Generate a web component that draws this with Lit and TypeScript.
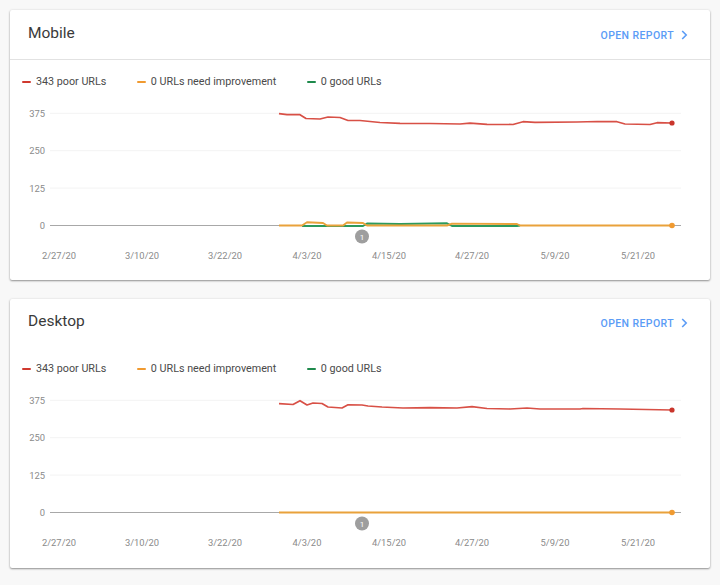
import { LitElement, html, css, svg } from "lit";
import { customElement, property } from "lit/decorators.js";

type Pt = [number, number];
const pts = (p: Pt[]) => p.map(([x, y]) => `${x},${y}`).join(" ");

const X_LABELS: [string, number][] = [
  ["2/27/20", 59], ["3/10/20", 142], ["3/22/20", 225], ["4/3/20", 307],
  ["4/15/20", 389], ["4/27/20", 472], ["5/9/20", 555], ["5/21/20", 638],
];

const MOBILE_RED: Pt[] = [[279,113.7],[287,114.7],[300,114.7],[306,118.5],[320,119],[328,117],[340,117.5],[348,120.5],[360,120.5],[380,122.5],[400,123.3],[430,123.5],[460,124],[470,123.2],[487,124.3],[513,124.5],[523,121.7],[535,122.3],[577,122],[597,121.5],[617,121.7],[625,124],[650,124.5],[657,122.7],[672,123]];
const MOBILE_ORANGE: Pt[] = [[279,225.5],[302,225.5],[307,222.3],[323,223],[327,225.5],[343,225.5],[347,222.5],[363,223],[367,225.5],[447,225.5],[452,223.6],[517,224],[520,225.5],[672,225.5]];
const MOBILE_GREEN: Pt[] = [[302,226],[327,226],[343,226],[347,226],[363,226],[367,223.5],[400,224],[447,223.3],[452,226],[517,226],[520,225.5]];
const DESK_RED: Pt[] = [[279,403.7],[293,404.5],[300,400.7],[307,405],[313,403],[322,403.5],[328,407],[342,408],[348,404.8],[362,405],[368,406],[382,407],[403,408],[430,407.7],[457,408],[472,406.7],[487,408.5],[510,409],[527,408],[540,409],[580,409],[583,408.5],[620,409],[672,410]];
const DESK_ORANGE: Pt[] = [[279,512.5],[672,512.5]];

@customElement("usability-card")
class UsabilityCard extends LitElement {
  @property() heading = "";
  @property({ type: Boolean }) divided = false;
  @property({ type: Number }) top = 0;
  @property({ type: Number }) chartHeight = 170;
  @property({ attribute: false }) red: Pt[] = [];
  @property({ attribute: false }) orange: Pt[] = [];
  @property({ attribute: false }) green: Pt[] = [];

  static styles = css`
    :host { display: block; }
    .card {
      background: #fff;
      border-radius: 2px;
      box-shadow: 0 1px 2px rgba(0,0,0,.4), 0 0 3px rgba(0,0,0,.08);
      font-family: Roboto, "Liberation Sans", sans-serif;
    }
    .head {
      display: flex;
      justify-content: space-between;
      padding: 13px 22px 0 18px;
      height: 36px;
    }
    .head.divided { padding-top: 14px; height: 35px; border-bottom: 1px solid #e2e2e2; }
    .title { font-size: 15.5px; line-height: 19px; color: #3a3a3a; }
    .open {
      display: flex;
      align-items: center;
      gap: 7px;
      height: 14px;
      margin-top: 4px;
      font-size: 10.5px;
      font-weight: 500;
      letter-spacing: .4px;
      color: #5b9cf6;
    }
    .legend {
      display: flex;
      padding: 15px 0 6px 12px;
      font-size: 10.75px;
      line-height: 14px;
      color: #4a4a4a;
    }
    .legend.plain { padding-top: 14px; }
    .item { display: flex; align-items: center; gap: 5px; }
    .item + .item { margin-left: 30.5px; }
    .swatch { width: 9px; height: 2.5px; border-radius: 1px; }
    .r { background: #d0392f; }
    .o { background: #f09a30; }
    .g { background: #1f8a4c; }
    svg.chart { display: block; width: 700px; }
    .grid { stroke: #f3f3f3; stroke-width: 1; }
    .axis { stroke: #a8a8a8; stroke-width: 1; }
    polyline { fill: none; stroke-width: 1.7; stroke-linejoin: round; }
    .lr { stroke: #d85046; }
    .lo { stroke: #e9a23b; stroke-width: 1.9; }
    .lg { stroke: #2c9a5e; stroke-width: 1.9; }
    .dr { fill: #c9352b; }
    .do { fill: #f09a30; }
    .bubble { fill: #9e9e9e; }
    .bubble-t { fill: #fff; font-size: 8px; text-anchor: middle; }
    .tick { fill: #8a8a8a; font-size: 9.4px; }
    .tick.y { text-anchor: end; }
    .tick.x { text-anchor: middle; }
  `;

  render() {
    const base = this.orange[this.orange.length - 1][1];
    const rows = [0, 1, 2, 3].map((i) => ({ y: base - i * 37.4, label: String(i * 125) }));
    const redEnd = this.red[this.red.length - 1];
    const plain = !this.divided;
    return html`<div class="card">
      <div class="head ${this.divided ? "divided" : ""}">
        <div class="title">${this.heading}</div>
        <div class="open">OPEN REPORT
          <svg width="7" height="10" viewBox="0 0 7 10"><path d="M1.2 1 L5.2 5 L1.2 9" fill="none" stroke="#5b9cf6" stroke-width="1.6"/></svg>
        </div>
      </div>
      <div class="legend ${plain ? "plain" : ""}">
        <div class="item"><span class="swatch r"></span>343 poor URLs</div>
        <div class="item"><span class="swatch o"></span>0 URLs need improvement</div>
        <div class="item"><span class="swatch g"></span>0 good URLs</div>
      </div>
      <svg class="chart" height=${this.chartHeight} viewBox="10 ${this.top} 700 ${this.chartHeight}">
        ${rows.map((r) => svg`
          <line class=${r.label === "0" ? "axis" : "grid"} x1="50" x2="681" y1=${r.y} y2=${r.y}></line>
          <text class="tick y" x="45" y=${r.y + 3.5}>${r.label}</text>`)}
        <polyline class="lr" points=${pts(this.red)}></polyline>
        ${this.green.length ? svg`<polyline class="lg" points=${pts(this.green)}></polyline>` : ""}
        <polyline class="lo" points=${pts(this.orange)}></polyline>
        <circle class="dr" cx=${redEnd[0]} cy=${redEnd[1]} r="2.6"></circle>
        <circle class="do" cx="672" cy=${base} r="2.8"></circle>
        <circle class="bubble" cx="362" cy=${base + 11} r="7"></circle>
        <text class="bubble-t" x="362" y=${base + 14}>1</text>
        ${X_LABELS.map(([t, x]) => svg`<text class="tick x" x=${x} y=${base + 33}>${t}</text>`)}
      </svg>
    </div>`;
  }
}

@customElement("app-root")
export class AppRoot extends LitElement {
  static styles = css`
    :host {
      display: flex;
      flex-direction: column;
      gap: 19px;
      box-sizing: border-box;
      width: 720px;
      height: 585px;
      padding: 10px 10px 0;
      background: #f8f8f8;
      overflow: hidden;
    }
  `;
  render() {
    return html`
      <usability-card heading="Mobile" divided .top=${95} .chartHeight=${185}
        .red=${MOBILE_RED} .orange=${MOBILE_ORANGE} .green=${MOBILE_GREEN}></usability-card>
      <usability-card heading="Desktop" .top=${382} .chartHeight=${186}
        .red=${DESK_RED} .orange=${DESK_ORANGE}></usability-card>
    `;
  }
}
void UsabilityCard;
